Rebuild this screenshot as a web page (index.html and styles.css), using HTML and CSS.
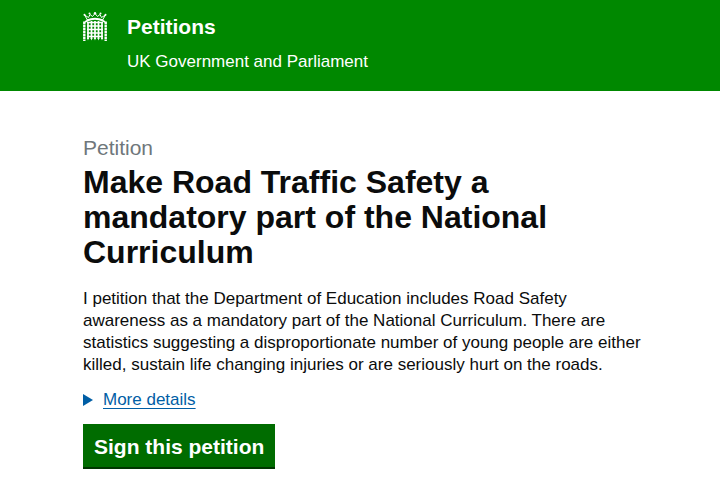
FILE: index.html
```html
<!DOCTYPE html>
<html lang="en">
<head>
    <meta charset="UTF-8">
    <meta name="viewport" content="width=device-width, initial-scale=1.0">
    <title>Petitions - UK Government and Parliament</title>
    <link rel="stylesheet" href="styles.css">
</head>
<body>
<header class="header">
    <div class="container header-inner">
        <!-- Portcullis -->
        <svg class="logo" viewBox="0 0 24 29" aria-hidden="true">
            <g fill="none" stroke="#fff">
                <path d="M4.500 8L1.500 3L5.500 5.500L7 2.500L9.500 4.500L12 1.500L14.500 4.500L17 2.500L18.500 5.500L22.500 3L19.500 8" stroke-width="1"/>
                <path d="M4 8.500Q12 5 20 8.500" stroke-width="2"/>
                <path d="M5 10V27M8.500 9V27M12 9V27M15.500 9V27M19 10V27" stroke-width="1.700"/>
                <path d="M4 10.500H20M4 14H20M4 17.500H20M4 21H20M4 24.500H20" stroke-width="1.700"/>
                <path d="M1.300 9.500V29M22.700 9.500V29" stroke-width="2.400" stroke-dasharray="2.500 .5"/>
                <path d="M2 10L4.500 8.500M22 10L19.500 8.500" stroke-width="1.800"/>
            </g>
            <g fill="#fff">
                <circle cx="1.500" cy="2.800" r="1"/>
                <circle cx="6.500" cy="1.500" r="1"/>
                <circle cx="12" cy="1.200" r="1.200"/>
                <circle cx="17.500" cy="1.500" r="1"/>
                <circle cx="22.500" cy="2.800" r="1"/>
                <path d="M4.100 26h1.800l-.9 2.500zM7.600 26h1.800l-.9 2.500zM11.100 26h1.800l-.9 2.500zM14.600 26h1.800l-.9 2.500zM18.100 26h1.800l-.9 2.500z"/>
            </g>
        </svg>
        <div class="header-text">
            <a class="header-title" href="#">Petitions</a>
            <span class="header-subtitle">UK Government and Parliament</span>
        </div>
    </div>
</header>

<main class="container main-content">
    <h1 class="page-title">
        <span class="context">Petition</span>
        Make Road Traffic Safety a mandatory part of the National Curriculum
    </h1>
    <p class="description">I petition that the Department of Education includes Road Safety awareness as a mandatory part of the National Curriculum. There are statistics suggesting a disproportionate number of young people are either killed, sustain life changing injuries or are seriously hurt on the roads.</p>
    <details class="more-details">
        <summary><span>More details</span></summary>
    </details>
    <button class="button" type="button">Sign this petition</button>
</main>
</body>
</html>
```

FILE: styles.css
```css
* {
    box-sizing: border-box;
    margin: 0;
    padding: 0;
}

body {
    background-color: #fff;
    color: #0b0c0c;
    font-family: "Liberation Sans", Arial, sans-serif;
    font-size: 17px;
    line-height: 22px;
}

.container {
    max-width: 720px;
    margin: 0 auto;
    padding: 0 74px 0 83px;
}

/* Header */
.header {
    background-color: #008800;
    color: #fff;
    padding: 12px 0 18px;
}

.header-inner {
    display: flex;
    align-items: flex-start;
    gap: 20px;
}

.logo {
    width: 24px;
    height: 29px;
}

.header-text {
    display: flex;
    flex-direction: column;
    gap: 9px;
}

.header-title {
    color: #fff;
    font-size: 21px;
    font-weight: bold;
    line-height: 30px;
    text-decoration: none;
}

/* Petition */
.main-content {
    padding-top: 43px;
}

.page-title {
    font-size: 32px;
    line-height: 35px;
    margin-bottom: 18px;
}

.context {
    display: block;
    color: #6f777b;
    font-size: 21px;
    font-weight: normal;
    line-height: 28px;
    margin-bottom: 3px;
}

.description {
    margin-bottom: 13px;
}

.more-details {
    color: #005ea5;
    margin-bottom: 13px;
}

.more-details summary {
    display: flex;
    align-items: center;
    gap: 10px;
    width: fit-content;
    cursor: pointer;
}

.more-details summary::before {
    content: '';
    border-left: 10px solid #005ea5;
    border-top: 6px solid transparent;
    border-bottom: 6px solid transparent;
}

.more-details span {
    text-decoration: underline;
    text-decoration-thickness: 1px;
    text-decoration-skip-ink: none;
    text-underline-offset: 3px;
}

.button {
    background-color: #006c00;
    border: none;
    box-shadow: inset 0 -2px 0 #003600;
    color: #fff;
    cursor: pointer;
    font-family: inherit;
    font-size: 21px;
    font-weight: bold;
    line-height: 24px;
    padding: 11px 11px 10px;
}

.button:hover {
    background-color: #005300;
}
```
